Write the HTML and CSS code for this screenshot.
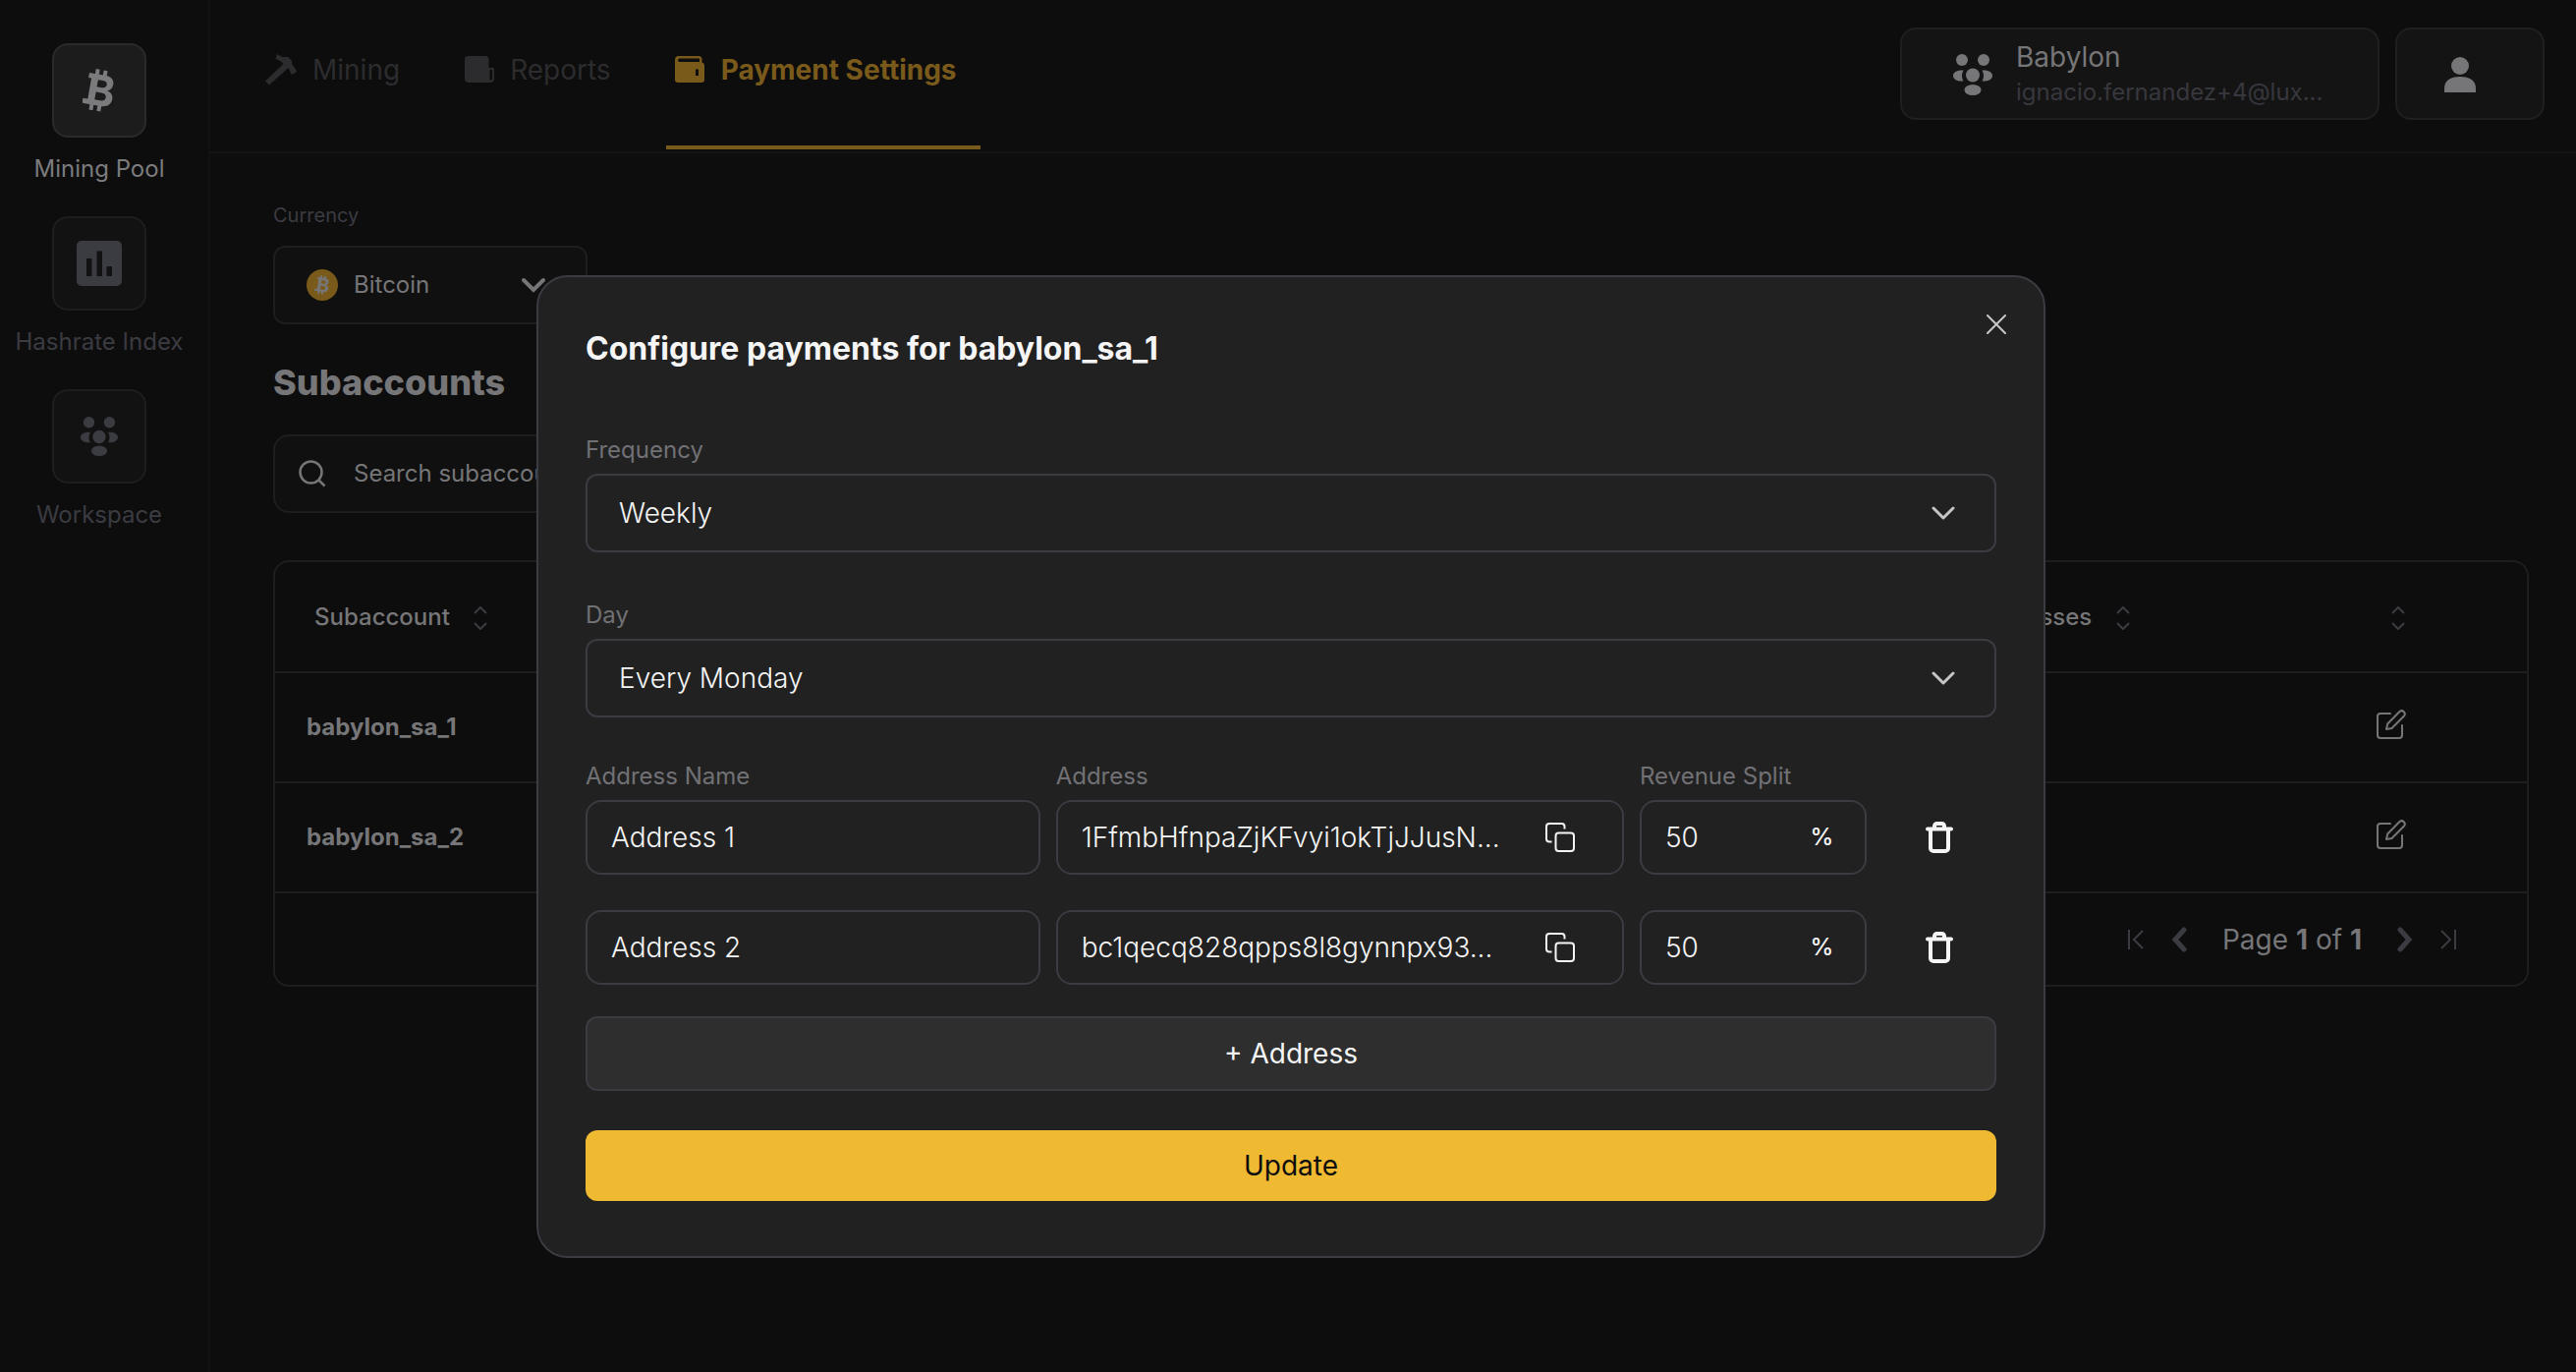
FILE: index.html
```html
<!DOCTYPE html>
<html lang="en">
<head>
    <meta charset="UTF-8">
    <meta name="viewport" content="width=device-width, initial-scale=1.0">
    <title>Payment Settings</title>
    <link rel="stylesheet" href="styles.css">
</head>
<body>
    <!-- Shared icons -->
    <svg class="sprite" aria-hidden="true">
        <symbol id="bitcoin" viewBox="0 0 34 44">
            <g transform="rotate(10 17 22)">
                <path fill-rule="evenodd" d="M4 6h16.500c6 0 9.500 3 9.500 7.800 0 3.600-2 6-5 7 4 .8 6.600 3.600 6.600 7.700 0 5.600-4 9-11 9H2v-5h5V11H4zM14 11.500v7.300h5c3 0 4.600-1.300 4.600-3.700s-1.600-3.600-4.600-3.600zM14 24v8h5.800c3.200 0 5-1.500 5-4.100S23 24 19.800 24z"/>
                <path d="M10 1h4v6h-4zM18 1h4v6h-4zM10 36h4v7h-4zM18 36h4v7h-4z"/>
            </g>
        </symbol>
        <symbol id="people" viewBox="0 0 40 42">
            <circle cx="9" cy="6" r="6"/>
            <circle cx="31" cy="6" r="6"/>
            <circle cx="20" cy="21.500" r="7"/>
            <path d="M10.500 16.500a11 11 0 0 0 0 11C4 28 0 25.500 0 22s4-6 10.500-5.500zM29.500 16.500a11 11 0 0 1 0 11C36 28 40 25.500 40 22s-4-6-10.500-5.500z"/>
            <ellipse cx="20" cy="36.500" rx="8.500" ry="5.500"/>
        </symbol>
        <symbol id="sort" viewBox="0 0 14 24">
            <path d="M1 7l6-6 6 6M1 17l6 6 6-6" fill="none" stroke="currentColor" stroke-width="2"/>
        </symbol>
        <symbol id="chevron" viewBox="0 0 24 14">
            <path d="M2 2l10 10L22 2" fill="none" stroke="currentColor" stroke-width="3" stroke-linecap="round" stroke-linejoin="round"/>
        </symbol>
        <symbol id="edit" viewBox="0 0 30 30">
            <path d="M14 4H4a3 3 0 0 0-3 3v19a3 3 0 0 0 3 3h19a3 3 0 0 0 3-3V16M10 20l1.200-5.500L23.500 2a3.200 3.200 0 0 1 4.500 4.500L15.500 19z" fill="none" stroke="currentColor" stroke-width="2" stroke-linejoin="round" stroke-linecap="round"/>
        </symbol>
        <symbol id="copy" viewBox="0 0 30 30">
            <path d="M6.500 19.500H4a3 3 0 0 1-3-3V4a3 3 0 0 1 3-3h12.500a3 3 0 0 1 3 3v2.500" fill="none" stroke="currentColor" stroke-width="2"/>
            <rect x="10.500" y="10.500" width="18.500" height="18.500" rx="3" fill="none" stroke="currentColor" stroke-width="2"/>
        </symbol>
        <symbol id="trash" viewBox="0 0 28 32">
            <path d="M2 7.500h24M9 7V4.500A2.500 2.500 0 0 1 11.500 2h5A2.500 2.500 0 0 1 19 4.500V7M5 8v19a3 3 0 0 0 3 3h12a3 3 0 0 0 3-3V8" fill="none" stroke="currentColor" stroke-width="4" stroke-linecap="round"/>
        </symbol>
    </svg>

    <div class="app">
        <aside class="sidebar">
            <a href="#" class="side-link active">
                <span class="side-icon"><svg width="34" height="44"><use href="#bitcoin"/></svg></span>
                Mining Pool
            </a>
            <a href="#" class="side-link">
                <span class="side-icon">
                    <svg width="46" height="46" viewBox="0 0 46 46"><path fill-rule="evenodd" d="M5 0h36a5 5 0 0 1 5 5v36a5 5 0 0 1-5 5H5a5 5 0 0 1-5-5V5a5 5 0 0 1 5-5zM10 18v18h5.500V18zM20.500 10.500V36H26V10.500zM30.500 26v10H36V26z"/></svg>
                </span>
                Hashrate Index
            </a>
            <a href="#" class="side-link">
                <span class="side-icon"><svg width="38" height="40"><use href="#people"/></svg></span>
                Workspace
            </a>
        </aside>

        <div class="page">
            <header class="topbar">
                <nav class="tabs">
                    <a href="#" class="tab">
                        <svg width="32" height="32" viewBox="0 0 32 32"><path d="M12 0l5.500 3H23l4 3.500V10c2 2.500 4 5 5 8l-5 3-3.500-7L4 31.500 0 27.500 18.500 10C16 7 13.500 6 10.500 5z"/></svg>
                        Mining
                    </a>
                    <a href="#" class="tab">
                        <svg width="32" height="32" viewBox="0 0 32 32"><path fill-rule="evenodd" d="M5 2h18a3.500 3.500 0 0 1 3.500 3.500V14H31a1 1 0 0 1 1 1v10a4 4 0 0 1-4 4H6a4 4 0 0 1-4-4V5.500A3.500 3.500 0 0 1 5 2zM27.500 16v10.500a2 2 0 0 0 2.500-2V16z"/></svg>
                        Reports
                    </a>
                    <a href="#" class="tab current">
                        <svg width="32" height="32" viewBox="0 0 32 32"><path fill-rule="evenodd" d="M5 2h20a3.500 3.500 0 0 1 3.500 3.500V8.500A3 3 0 0 1 31 11.500V26a3 3 0 0 1-3 3H4a3 3 0 0 1-3-3V6a4 4 0 0 1 4-4zM5.500 4.500a1.800 1.800 0 0 0 0 3.500H26V4.500zM22 15.500V22h3v-6.500z"/></svg>
                        Payment Settings
                    </a>
                </nav>
                <div class="account">
                    <button type="button" class="workspace">
                        <svg width="40" height="42"><use href="#people"/></svg>
                        <span class="workspace-text">
                            <span class="workspace-name">Babylon</span>
                            <span class="workspace-mail">ignacio.fernandez+4@lux...</span>
                        </span>
                    </button>
                    <button type="button" class="user" aria-label="Profile">
                        <svg width="32" height="36" viewBox="0 0 32 36"><circle cx="16" cy="9" r="9"/><path d="M0 36v-4c0-8 6-12 16-12s16 4 16 12v4z"/></svg>
                    </button>
                </div>
            </header>

            <main class="content">
                <label class="currency-label" for="currency">Currency</label>
                <div class="currency">
                    <span class="coin"><svg width="16" height="20"><use href="#bitcoin"/></svg></span>
                    <select id="currency">
                        <option>Bitcoin</option>
                    </select>
                    <svg width="26" height="16" viewBox="0 0 26 16"><path d="M3 3l10 10L23 3" fill="none" stroke="currentColor" stroke-width="4" stroke-linecap="round"/></svg>
                </div>

                <h1>Subaccounts</h1>

                <div class="search">
                    <svg width="28" height="28" viewBox="0 0 28 28"><path d="M20 20l6.500 6.500" stroke="currentColor" stroke-width="2.500"/><circle cx="12.500" cy="12.500" r="11" fill="none" stroke="currentColor" stroke-width="2.500"/></svg>
                    <input type="search" placeholder="Search subaccount" aria-label="Search subaccount">
                </div>

                <div class="table-box">
                    <table>
                        <thead>
                            <tr>
                                <th>Subaccount <svg width="14" height="24"><use href="#sort"/></svg></th>
                                <th class="col-address">Addresses <svg width="14" height="24"><use href="#sort"/></svg></th>
                                <th class="col-edit"><svg width="14" height="24"><use href="#sort"/></svg></th>
                            </tr>
                        </thead>
                        <tbody>
                            <tr>
                                <td>babylon_sa_1</td>
                                <td></td>
                                <td class="col-edit"><button type="button" aria-label="Edit babylon_sa_1"><svg width="30" height="30"><use href="#edit"/></svg></button></td>
                            </tr>
                            <tr>
                                <td>babylon_sa_2</td>
                                <td></td>
                                <td class="col-edit"><button type="button" aria-label="Edit babylon_sa_2"><svg width="30" height="30"><use href="#edit"/></svg></button></td>
                            </tr>
                        </tbody>
                    </table>
                    <div class="pagination">
                        <button type="button" aria-label="First page"><svg width="16" height="20" viewBox="0 0 16 20"><path d="M1 0v20M15 1l-9 9 9 9" fill="none" stroke="currentColor" stroke-width="2"/></svg></button>
                        <button type="button" aria-label="Previous page"><svg width="16" height="26" viewBox="0 0 16 26"><path d="M13 3L4 13l9 10" fill="none" stroke="currentColor" stroke-width="5" stroke-linecap="round"/></svg></button>
                        <span class="page-text">Page <b>1</b> of <b>1</b></span>
                        <button type="button" aria-label="Next page"><svg width="16" height="26" viewBox="0 0 16 26"><path d="M3 3l9 10-9 10" fill="none" stroke="currentColor" stroke-width="5" stroke-linecap="round"/></svg></button>
                        <button type="button" aria-label="Last page"><svg width="16" height="20" viewBox="0 0 16 20"><path d="M15 0v20M1 1l9 9-9 9" fill="none" stroke="currentColor" stroke-width="2"/></svg></button>
                    </div>
                </div>
            </main>
        </div>
    </div>

    <!-- Configure payments -->
    <div class="overlay">
        <form class="modal" role="dialog" aria-labelledby="modal-title">
            <button type="button" class="close" aria-label="Close">
                <svg width="20" height="20" viewBox="0 0 20 20"><path d="M1 1l18 18M19 1L1 19" stroke="currentColor" stroke-width="2" stroke-linecap="round"/></svg>
            </button>
            <h2 id="modal-title">Configure payments for babylon_sa_1</h2>

            <div class="field">
                <label for="frequency">Frequency</label>
                <div class="select">
                    <select id="frequency">
                        <option>Weekly</option>
                    </select>
                    <svg width="24" height="14"><use href="#chevron"/></svg>
                </div>
            </div>
            <div class="field">
                <label for="day">Day</label>
                <div class="select">
                    <select id="day">
                        <option>Every Monday</option>
                    </select>
                    <svg width="24" height="14"><use href="#chevron"/></svg>
                </div>
            </div>

            <div class="addresses">
                <label for="name1">Address Name</label>
                <label for="address1">Address</label>
                <label class="split-label" for="split1">Revenue Split</label>

                <div class="box"><input id="name1" type="text" value="Address 1"></div>
                <div class="box">
                    <input id="address1" type="text" value="1FfmbHfnpaZjKFvyi1okTjJJusN...">
                    <button type="button" class="copy" aria-label="Copy address"><svg width="30" height="30"><use href="#copy"/></svg></button>
                </div>
                <div class="box"><input id="split1" type="text" value="50"><span class="percent">%</span></div>
                <button type="button" class="trash" aria-label="Delete address"><svg width="28" height="32"><use href="#trash"/></svg></button>

                <div class="box second"><input type="text" value="Address 2" aria-label="Address Name"></div>
                <div class="box second">
                    <input type="text" value="bc1qecq828qpps8l8gynnpx93..." aria-label="Address">
                    <button type="button" class="copy" aria-label="Copy address"><svg width="30" height="30"><use href="#copy"/></svg></button>
                </div>
                <div class="box second"><input type="text" value="50" aria-label="Revenue Split"><span class="percent">%</span></div>
                <button type="button" class="trash second" aria-label="Delete address"><svg width="28" height="32"><use href="#trash"/></svg></button>
            </div>

            <button type="button" class="add">+ Address</button>
            <button type="submit" class="update">Update</button>
        </form>
    </div>
</body>
</html>
```

FILE: styles.css
```css
* {
    box-sizing: border-box;
    margin: 0;
    padding: 0;
}

body {
    background-color: #0d0d0d;
    color: #767678;
    font-family: Inter, 'Liberation Sans', sans-serif;
    font-size: 24px;
    line-height: 32px;
}

a {
    color: inherit;
    text-decoration: none;
}

button,
input,
select {
    background: none;
    border: none;
    outline: none;
    color: inherit;
    font: inherit;
}

button {
    cursor: pointer;
}

select,
input {
    appearance: none;
    width: 100%;
    min-width: 0;
    flex: 1;
}

svg {
    display: block;
    flex: none;
    fill: currentColor;
}

.sprite {
    display: none;
}

.app {
    display: flex;
    min-height: 100vh;
}

/* Sidebar */
.sidebar {
    width: 214px;
    padding: 44px 10px 0 0;
    border-right: 2px solid #111111;
    display: flex;
    flex-direction: column;
    gap: 32px;
}

.side-link {
    display: flex;
    flex-direction: column;
    align-items: center;
    gap: 16px;
    color: #3b3b42;
}

.side-link.active {
    color: #7b7b7e;
}

.side-icon {
    width: 96px;
    height: 96px;
    display: flex;
    align-items: center;
    justify-content: center;
    background-color: #121212;
    border: 2px solid #1e1e1e;
    border-radius: 16px;
}

.active .side-icon {
    background-color: #1c1c1c;
    border-color: #2a2a2a;
}

.page {
    flex: 1;
    min-width: 0;
}

/* Top bar */
.topbar {
    height: 156px;
    padding: 0 32px 2px 48px;
    border-bottom: 2px solid #151515;
    display: flex;
    justify-content: space-between;
}

.tabs {
    display: flex;
    gap: 32px;
}

.tab {
    display: flex;
    align-items: center;
    gap: 16px;
    padding: 0 24px 6px 8px;
    border-bottom: 4px solid transparent;
    color: #2c2c2e;
    font-size: 28px;
}

.tab.current {
    color: #7a5a1a;
    border-color: #7a5a1a;
    font-weight: 700;
}

.account {
    display: flex;
    gap: 16px;
    padding: 28px 0;
}

.workspace,
.user {
    height: 94px;
    padding-top: 2px;
    display: flex;
    align-items: center;
    background-color: #141414;
    border: 2px solid #1f1f20;
    border-radius: 16px;
}

.workspace {
    width: 488px;
    padding-left: 52px;
    gap: 24px;
    text-align: left;
}

.user {
    width: 152px;
    padding-left: 48px;
}

.workspace-text {
    display: flex;
    flex-direction: column;
}

.workspace-name {
    font-size: 28px;
    line-height: 36px;
}

.workspace-mail {
    color: #37373d;
    line-height: 36px;
}

/* Content */
.content {
    padding: 48px 48px 0 64px;
}

.currency-label {
    display: block;
    margin-bottom: 16px;
    color: #3b3b42;
    font-size: 20px;
    line-height: 30px;
}

.currency,
.search {
    height: 80px;
    display: flex;
    align-items: center;
    background-color: #101010;
    border: 2px solid #1e1e1f;
}

.currency {
    width: 320px;
    padding: 0 40px 0 32px;
    gap: 16px;
    border-radius: 12px;
}

.coin {
    width: 32px;
    height: 32px;
    display: flex;
    align-items: center;
    justify-content: center;
    border-radius: 50%;
    background-color: #7a5a1a;
}

h1 {
    margin: 36px 0 30px;
    font-size: 36px;
    font-weight: 800;
    line-height: 46px;
}

.search {
    width: 480px;
    padding: 0 24px;
    gap: 28px;
    border-radius: 16px;
}

.search input::placeholder {
    color: #767678;
    opacity: 1;
}

/* Table */
.table-box {
    margin-top: 48px;
    border: 2px solid #1e1e1f;
    border-radius: 16px;
}

table {
    width: 100%;
    border-collapse: separate;
    border-spacing: 0;
    table-layout: fixed;
}

th,
td {
    height: 112px;
    padding: 0 32px;
    border-bottom: 2px solid #1e1e1f;
    text-align: left;
    font-weight: 700;
}

th {
    height: 113px;
    padding: 0 40px;
    font-weight: 500;
}

th svg {
    display: inline-block;
    margin-left: 18px;
    vertical-align: middle;
    color: #3b3b42;
}

.col-address {
    width: 305px;
}

th.col-edit {
    width: 300px;
    padding: 0 124px 0 0;
    text-align: right;
}

td.col-edit {
    padding: 0 123px 0 0;
}

td button {
    margin: 0 0 6px auto;
    display: block;
}

.pagination {
    height: 93px;
    padding-right: 72px;
    display: flex;
    align-items: center;
    justify-content: flex-end;
    gap: 28px;
    color: #3b3b42;
}

.page-text {
    padding: 0 8px;
    color: #767678;
    font-size: 28px;
}

/* Modal */
.overlay {
    position: fixed;
    inset: 0;
    padding: 280px 0 0 6px;
    display: flex;
    justify-content: center;
    align-items: flex-start;
}

.modal {
    position: relative;
    width: 1536px;
    padding: 48px 48px 56px;
    display: flex;
    flex-direction: column;
    background-color: #212121;
    border: 2px solid #3b3b42;
    border-radius: 32px;
    color: #f5f5f5;
}

.close {
    position: absolute;
    top: 38px;
    right: 38px;
    color: #c6c6c8;
}

h2 {
    margin-bottom: 62px;
    font-size: 32px;
    font-weight: 700;
    line-height: 50px;
}

label {
    color: #717175;
}

.field + .field {
    margin-top: 48px;
}

.field label {
    display: block;
    height: 40px;
}

.select {
    height: 80px;
    padding: 0 40px 0 32px;
    display: flex;
    align-items: center;
    border: 2px solid #3b3b42;
    border-radius: 12px;
    font-size: 28px;
    font-weight: 300;
}

.select svg {
    color: #c6c6c8;
}

.addresses {
    display: grid;
    grid-template-columns: minmax(0, 4fr) minmax(0, 5fr) minmax(0, 2fr) minmax(0, 1fr);
    column-gap: 16px;
    margin: 44px 0 32px;
}

.addresses label {
    height: 40px;
}

.split-label {
    grid-column: span 2;
}

.box {
    height: 76px;
    padding: 0 32px 0 24px;
    display: flex;
    align-items: center;
    border: 2px solid #3b3b42;
    border-radius: 16px;
    font-size: 28px;
    font-weight: 300;
}

.second {
    margin-top: 36px;
}

.copy {
    margin-right: 16px;
}

.percent {
    font-size: 24px;
    font-weight: 500;
}

.trash {
    display: flex;
    align-items: center;
    justify-content: center;
}

.add,
.update {
    height: 76px;
    border-radius: 12px;
    font-size: 28px;
}

.add {
    margin-bottom: 40px;
    background-color: #2e2e2e;
    border: 2px solid #3b3b42;
}

.update {
    height: 72px;
    background-color: #f0b932;
    color: #0d0d0d;
}
```
